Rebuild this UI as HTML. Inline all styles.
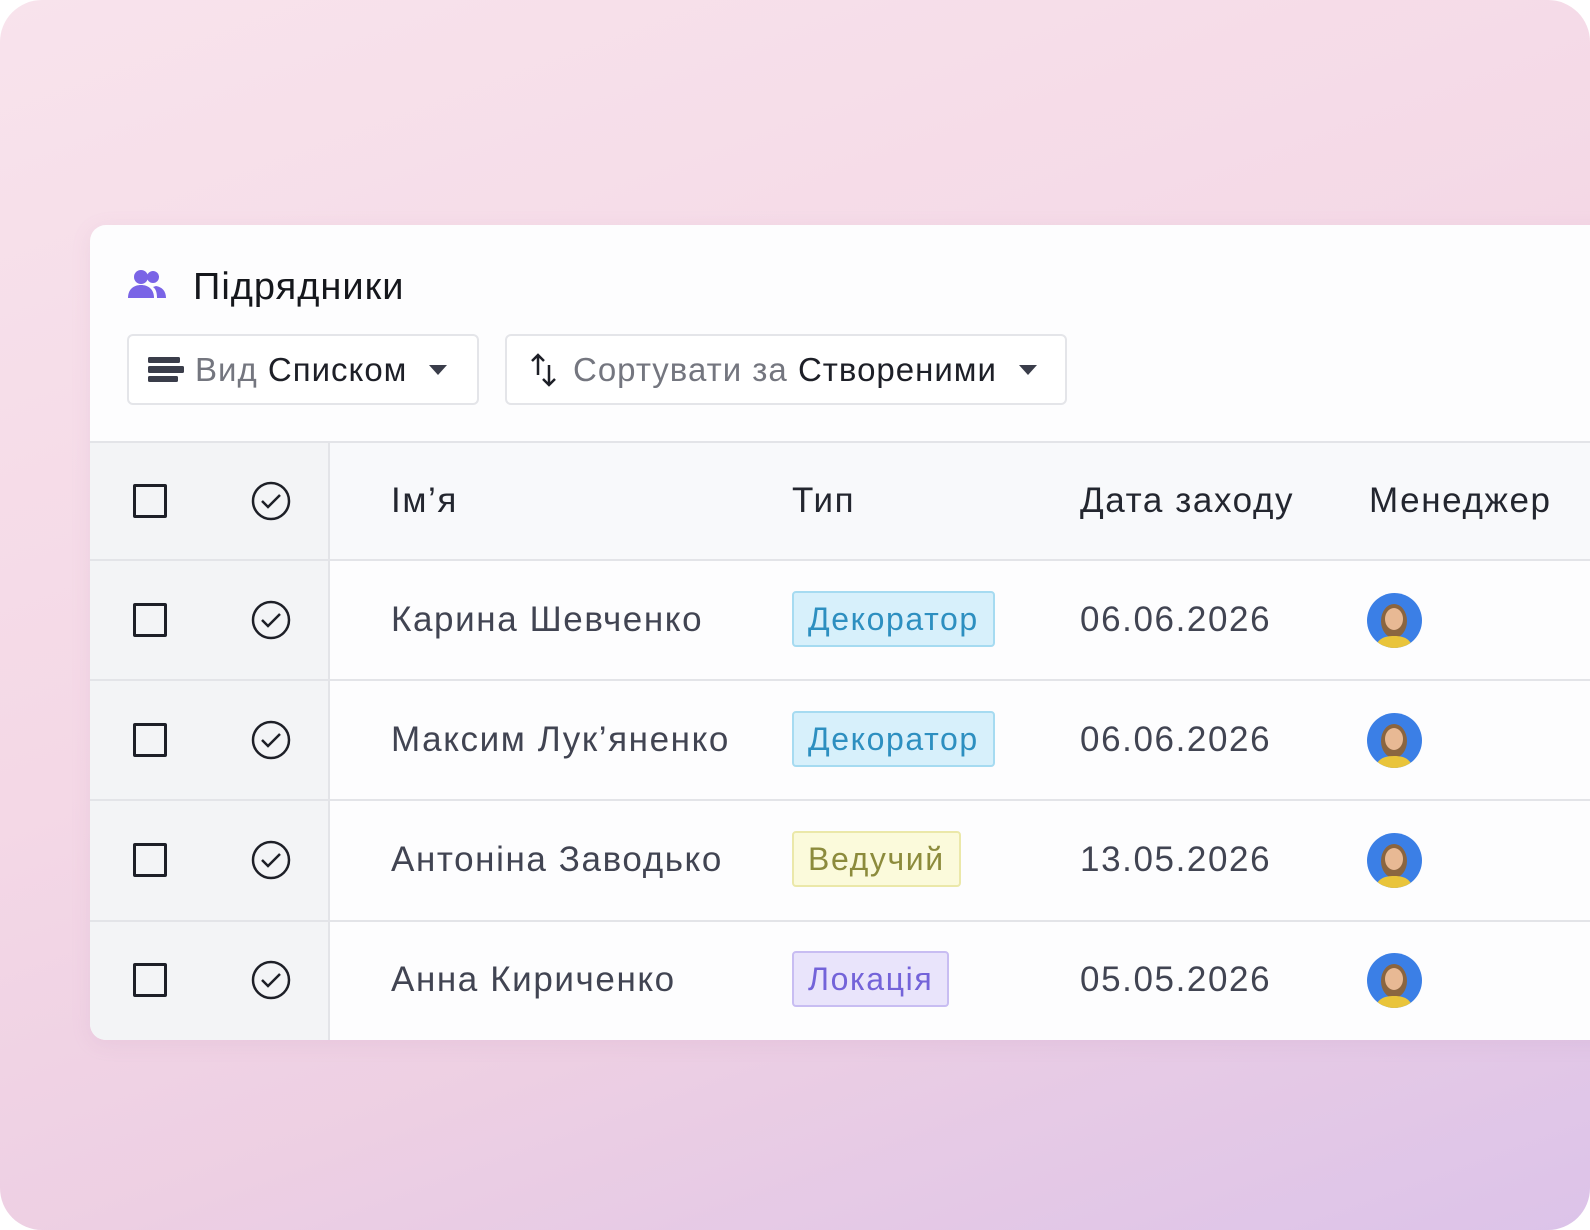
<!DOCTYPE html>
<html><head><meta charset="utf-8"><style>
*{margin:0;padding:0;box-sizing:border-box}
html,body{width:1590px;height:1230px;overflow:hidden;background:#fff}
body{font-family:"Liberation Sans",sans-serif}
.bg{position:absolute;left:0;top:0;width:1590px;height:1230px;border-radius:42px;
background:linear-gradient(160deg,#f8e3ec 0%,#f4d8e6 45%,#edcfe3 70%,#dcc3e9 100%);overflow:hidden}
.card{position:absolute;left:90px;top:225px;width:1560px;height:815px;background:#fdfdfe;border-radius:16px;overflow:hidden;box-shadow:0 4px 20px rgba(180,120,170,.12)}
.title{position:absolute;left:103px;top:41px;font-size:38px;color:#15171c;letter-spacing:1px}
.ticon{position:absolute;left:37px;top:44px}
.btn{position:absolute;top:109px;height:71px;border:2px solid #e4e5e9;border-radius:6px;background:#fff;font-size:33px;display:flex;align-items:center;letter-spacing:1px}
.gray{color:#74767f}.dark{color:#1d1f27}
.left{position:absolute;left:0;top:217px;width:240px;height:598px;background:#f3f4f6;border-right:2px solid #e3e4e8}
.hdr{position:absolute;left:240px;top:217px;width:1400px;height:118px;background:#f8f9fb}
.hline{position:absolute;left:0;width:1560px;height:2px;background:#e3e4e8}
.cb{position:absolute;left:43px;width:34px;height:34px;border:3px solid #1d1f27;border-radius:2px}
.ck{position:absolute;left:161px}
.t{position:absolute;font-size:35px;color:#414452;line-height:40px;letter-spacing:1.6px;white-space:nowrap}
.h{color:#23262f}
.badge{position:absolute;left:702px;height:56px;border-radius:4px;font-size:32px;line-height:52px;padding:0 14px;border:2px solid;letter-spacing:1.6px}
.blue{background:#d7f0fb;border-color:#a6dbf1;color:#2d8fc0}
.yel{background:#fbfadb;border-color:#ebe8a9;color:#8c8b3c}
.pur{background:#e9e4fb;border-color:#c8bdf2;color:#7363d9}
.av{position:absolute;left:1277px;width:55px;height:55px;border-radius:50%;background:#3b7fe6;overflow:hidden}
</style></head><body>
<div class="bg">
<div class="card">
 <svg class="ticon" width="40" height="30" viewBox="0 0 40 30">
  <circle cx="14" cy="8" r="7" fill="#7a64e6"/><circle cx="26" cy="8" r="6" fill="#7a64e6"/>
  <path d="M1 29c0-9 6-13 13-13s13 4 13 13z" fill="#7a64e6"/><path d="M29 17c6 1 10 5 10 12h-9c0-5-1-9-4-11z" fill="#7a64e6"/>
 </svg>
 <div class="title">Підрядники</div>
 <div class="btn" style="left:37px;width:352px">
  <svg style="margin-left:18px" width="38" height="30" viewBox="0 0 38 30"><rect x="1" y="2" width="32" height="6" rx="1.5" fill="#3a3d4a"/><rect x="1" y="11" width="36" height="7" rx="1.5" fill="#3a3d4a"/><rect x="1" y="21" width="30" height="6" rx="1.5" fill="#3a3d4a"/></svg>
  <span class="gray" style="margin-left:10px">Вид</span>&nbsp;<span class="dark">Списком</span>
  <svg style="margin-left:22px" width="18" height="10"><path d="M0 0h18L9 10z" fill="#3a3d4a"/></svg>
 </div>
 <div class="btn" style="left:415px;width:562px">
  <svg style="margin-left:22px" width="30" height="38" viewBox="0 0 30 38"><path d="M9 24V4M3 10l6-6 6 6M20 14v20M14 28l6 6 6-6" stroke="#1d1f27" stroke-width="2.5" fill="none"/></svg>
  <span class="gray" style="margin-left:14px">Сортувати за</span>&nbsp;<span class="dark">Створеними</span>
  <svg style="margin-left:22px" width="18" height="10"><path d="M0 0h18L9 10z" fill="#3a3d4a"/></svg>
 </div>
 <div class="left"></div>
 <div class="hdr"></div>
 <div class="hline" style="top:216px"></div>
 <div class="hline" style="top:334px"></div>
 <div class="hline" style="top:454px"></div>
 <div class="hline" style="top:574px"></div>
 <div class="hline" style="top:695px"></div>

 <div class="t h" style="left:301px;top:256px">Ім’я</div>
 <div class="t h" style="left:702px;top:256px">Тип</div>
 <div class="t h" style="left:990px;top:256px">Дата заходу</div>
 <div class="t h" style="left:1279px;top:256px">Менеджер</div>

 <div class="cb" style="top:259px"></div>
 <div class="cb" style="top:378px"></div>
 <div class="cb" style="top:498px"></div>
 <div class="cb" style="top:618px"></div>
 <div class="cb" style="top:738px"></div>
 <svg class="ck" style="top:256px" width="40" height="40"><circle cx="20" cy="20" r="18" stroke="#1d1f27" stroke-width="2.5" fill="none"/><path d="M11 20l6 6 12-12" stroke="#1d1f27" stroke-width="2.5" fill="none"/></svg>
 <svg class="ck" style="top:375px" width="40" height="40"><circle cx="20" cy="20" r="18" stroke="#1d1f27" stroke-width="2.5" fill="none"/><path d="M11 20l6 6 12-12" stroke="#1d1f27" stroke-width="2.5" fill="none"/></svg>
 <svg class="ck" style="top:495px" width="40" height="40"><circle cx="20" cy="20" r="18" stroke="#1d1f27" stroke-width="2.5" fill="none"/><path d="M11 20l6 6 12-12" stroke="#1d1f27" stroke-width="2.5" fill="none"/></svg>
 <svg class="ck" style="top:615px" width="40" height="40"><circle cx="20" cy="20" r="18" stroke="#1d1f27" stroke-width="2.5" fill="none"/><path d="M11 20l6 6 12-12" stroke="#1d1f27" stroke-width="2.5" fill="none"/></svg>
 <svg class="ck" style="top:735px" width="40" height="40"><circle cx="20" cy="20" r="18" stroke="#1d1f27" stroke-width="2.5" fill="none"/><path d="M11 20l6 6 12-12" stroke="#1d1f27" stroke-width="2.5" fill="none"/></svg>

 <div class="t" style="left:301px;top:375px">Карина Шевченко</div>
 <div class="t" style="left:301px;top:495px">Максим Лук’яненко</div>
 <div class="t" style="left:301px;top:615px">Антоніна Заводько</div>
 <div class="t" style="left:301px;top:735px">Анна Кириченко</div>

 <div class="badge blue" style="top:366px">Декоратор</div>
 <div class="badge blue" style="top:486px">Декоратор</div>
 <div class="badge yel" style="top:606px">Ведучий</div>
 <div class="badge pur" style="top:726px">Локація</div>

 <div class="t" style="left:990px;top:375px">06.06.2026</div>
 <div class="t" style="left:990px;top:495px">06.06.2026</div>
 <div class="t" style="left:990px;top:615px">13.05.2026</div>
 <div class="t" style="left:990px;top:735px">05.05.2026</div>

 <div class="av" style="top:368px"><svg width="55" height="55"><ellipse cx="27" cy="28" rx="13" ry="17" fill="#8a6540"/><ellipse cx="27" cy="26" rx="9" ry="11" fill="#e8b994"/><path d="M8 55c3-10 10-12 19-12s16 2 19 12z" fill="#e9c43a"/></svg></div>
 <div class="av" style="top:488px"><svg width="55" height="55"><ellipse cx="27" cy="28" rx="13" ry="17" fill="#8a6540"/><ellipse cx="27" cy="26" rx="9" ry="11" fill="#e8b994"/><path d="M8 55c3-10 10-12 19-12s16 2 19 12z" fill="#e9c43a"/></svg></div>
 <div class="av" style="top:608px"><svg width="55" height="55"><ellipse cx="27" cy="28" rx="13" ry="17" fill="#8a6540"/><ellipse cx="27" cy="26" rx="9" ry="11" fill="#e8b994"/><path d="M8 55c3-10 10-12 19-12s16 2 19 12z" fill="#e9c43a"/></svg></div>
 <div class="av" style="top:728px"><svg width="55" height="55"><ellipse cx="27" cy="28" rx="13" ry="17" fill="#8a6540"/><ellipse cx="27" cy="26" rx="9" ry="11" fill="#e8b994"/><path d="M8 55c3-10 10-12 19-12s16 2 19 12z" fill="#e9c43a"/></svg></div>
</div>
</div>
</body></html>
